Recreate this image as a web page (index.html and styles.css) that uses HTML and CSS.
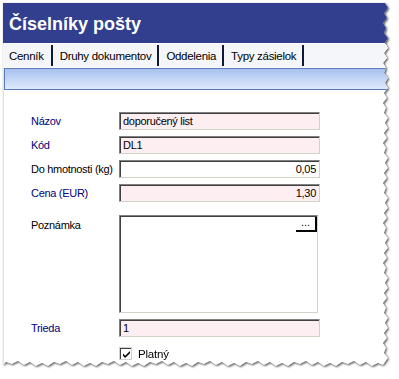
FILE: index.html
```html
<!DOCTYPE html>
<html lang="sk">
<head>
<meta charset="utf-8">
<title>Číselníky pošty</title>
<link rel="stylesheet" href="styles.css">
</head>
<body>
<div class="frame">
  <div class="sheet">
    <div class="titlebar"><h1 class="title">Číselníky pošty</h1></div>
    <div class="tabs">
      <div class="tab tab-active">Cenník</div>
      <div class="tab">Druhy dokumentov</div>
      <div class="tab">Oddelenia</div>
      <div class="tab">Typy zásielok</div>
    </div>
    <div class="bar"></div>
    <div class="form">
      <div class="row r1">
        <span class="lbl lbl-req">Názov</span>
        <div class="field field-req">doporučený list</div>
      </div>
      <div class="row">
        <span class="lbl lbl-req">Kód</span>
        <div class="field field-req">DL1</div>
      </div>
      <div class="row">
        <span class="lbl">Do hmotnosti (kg)</span>
        <div class="field field-num">0,05</div>
      </div>
      <div class="row">
        <span class="lbl lbl-req">Cena (EUR)</span>
        <div class="field field-req field-num">1,30</div>
      </div>
      <div class="row row-memo">
        <span class="lbl lbl-memo">Poznámka</span>
        <div class="memo"><span class="dots">...</span></div>
      </div>
      <div class="row row-trieda">
        <span class="lbl lbl-req">Trieda</span>
        <div class="field field-req">1</div>
      </div>
      <div class="row row-check">
        <span class="lbl"></span>
        <span class="check"><svg width="9" height="9" viewBox="0 0 9 9"><path d="M1 3.5 L3.2 5.7 L8 1 L8 3.2 L3.2 8 L1 5.7 Z" fill="#000"/></svg></span>
        <span class="check-text">Platný</span>
      </div>
    </div>
  </div>
</div>
</body>
</html>
```

FILE: styles.css
```css
html, body {
  margin: 0;
  padding: 0;
  background: #ffffff;
}
body {
  font-family: "Liberation Sans", Arial, sans-serif;
  font-size: 11px;
  color: #000;
}
.frame {
  margin: 3px 0 0 3px;
  width: 388px;
  height: 370px;
  filter: drop-shadow(1px 1px 1px rgba(0,0,0,0.7));
}
.sheet {
  width: 386px;
  height: 366px;
  background: #ffffff;
  display: flex;
  flex-direction: column;
  box-shadow: inset 1px 0 0 #e4e4e4;
  clip-path: polygon(0 0, 382px 0, 385px 5px, 381px 10px, 384px 15px, 380px 20px, 383px 25px, 381px 30px, 385px 35px, 382px 40px, 385px 45px, 381px 50px, 384px 55px, 380px 60px, 383px 65px, 381px 70px, 385px 75px, 382px 80px, 385px 85px, 381px 90px, 384px 95px, 380px 100px, 383px 105px, 381px 110px, 385px 115px, 382px 120px, 385px 125px, 381px 130px, 384px 135px, 380px 140px, 383px 145px, 381px 150px, 385px 155px, 382px 160px, 385px 165px, 381px 170px, 384px 175px, 380px 180px, 383px 185px, 381px 190px, 385px 195px, 382px 200px, 385px 205px, 381px 210px, 384px 215px, 380px 220px, 383px 225px, 381px 230px, 385px 235px, 382px 240px, 385px 245px, 381px 250px, 384px 255px, 380px 260px, 383px 265px, 381px 270px, 385px 275px, 382px 280px, 385px 285px, 381px 290px, 384px 295px, 380px 300px, 383px 305px, 381px 310px, 385px 315px, 382px 320px, 385px 325px, 381px 330px, 384px 335px, 380px 340px, 383px 345px, 381px 350px, 385px 355px, 380px 362px, 375px 360px, 369px 363px, 363px 359px, 357px 362px, 351px 358px, 345px 361px, 339px 359px, 333px 363px, 327px 360px, 321px 363px, 315px 359px, 309px 362px, 303px 358px, 297px 361px, 291px 359px, 285px 363px, 279px 360px, 273px 363px, 267px 359px, 261px 362px, 255px 358px, 249px 361px, 243px 359px, 237px 363px, 231px 360px, 225px 363px, 219px 359px, 213px 362px, 207px 358px, 201px 361px, 195px 359px, 189px 363px, 183px 360px, 177px 363px, 171px 359px, 165px 362px, 159px 358px, 153px 361px, 147px 359px, 141px 363px, 135px 360px, 129px 363px, 123px 359px, 117px 362px, 111px 358px, 105px 361px, 99px 359px, 93px 363px, 87px 360px, 81px 363px, 75px 359px, 69px 362px, 63px 358px, 57px 361px, 51px 359px, 45px 363px, 39px 360px, 33px 363px, 27px 359px, 21px 362px, 15px 358px, 9px 361px, 3px 359px, 0 362px);
}
.titlebar {
  height: 40px;
  background: #323f8f;
  display: flex;
  align-items: center;
  padding-left: 6px;
  flex: none;
}
.title {
  margin: 0;
  color: #ffffff;
  font-size: 18px;
  font-weight: bold;
  line-height: 1;
  padding-top: 2px;
}
.tabs {
  margin-top: 1px;
  height: 23px;
  background: #f4f6f9;
  display: flex;
  align-items: stretch;
  flex: none;
}
.tab {
  font-size: 11.5px;
  letter-spacing: -0.3px;
  white-space: nowrap;
  padding: 0 6px 0 7px;
  display: flex;
  align-items: center;
  border-right: 2px solid #101a36;
  margin: 1px 0 1px 0;
}
.tab-active {
  padding-left: 6px;
  padding-right: 7px;
}
.bar {
  margin: 1px 0 0 1px;
  height: 20px;
  border: 1px solid #5b7db7;
  background: linear-gradient(to bottom, #a7c2ee, #dfeafb);
  flex: none;
}
.form {
  padding: 22px 0 0 28px;
  display: flex;
  flex-direction: column;
  gap: 6px;
}
.row {
  display: flex;
  align-items: center;
}
.lbl {
  width: 88px;
  flex: none;
  font-size: 11px;
  letter-spacing: -0.3px;
  white-space: nowrap;
}
.lbl-req {
  color: #000080;
}
.field {
  height: 16px;
  border-top: 1px solid #808080;
  border-left: 1px solid #808080;
  border-right: 1px solid #d4d0c8;
  border-bottom: 1px solid #d4d0c8;
  box-shadow: inset 1px 1px 0 #404040;
  background: #ffffff;
  padding: 0 3px 0 3px;
  line-height: 17px;
  font-size: 11px;
  letter-spacing: -0.3px;
  white-space: nowrap;
  box-sizing: content-box;
  width: 193px;
}
.field-req {
  background: #fdeef2;
}
.field-num {
  text-align: right;
}
.row-memo {
  align-items: flex-start;
  margin-top: 7px;
}
.lbl-memo {
  padding-top: 4px;
}
.memo {
  width: 197px;
  height: 96px;
  border-top: 1px solid #808080;
  border-left: 1px solid #808080;
  border-right: 1px solid #d4d0c8;
  border-bottom: 1px solid #d4d0c8;
  box-shadow: inset 1px 1px 0 #404040;
  background: #fff;
  display: flex;
  justify-content: flex-end;
  align-items: flex-start;
}
.dots {
  width: 21px;
  height: 15px;
  border-right: 2px solid #000;
  border-bottom: 2px solid #000;
  box-sizing: border-box;
  font-size: 11px;
  line-height: 11px;
  text-align: center;
  margin-top: 1px;
}
.row-trieda {
  margin-top: 0;
}
.row-check {
  margin-top: 4px;
}
.check {
  width: 11px;
  height: 11px;
  border-top: 1px solid #808080;
  border-left: 1px solid #808080;
  border-right: 1px solid #fff;
  border-bottom: 1px solid #fff;
  box-shadow: inset 1px 1px 0 #404040;
  background: #fff;
  display: flex;
  align-items: center;
  justify-content: center;
  outline: 1px solid #d4d0c8;
  outline-offset: -1px;
}
.check svg {
  display: block;
  margin: 1px 0 0 1px;
}
.check-text {
  margin-left: 6px;
  font-size: 11.5px;
  letter-spacing: -0.2px;
}
```
